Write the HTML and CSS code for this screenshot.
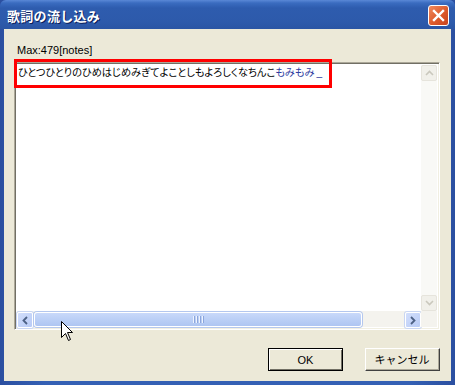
FILE: index.html
```html
<!DOCTYPE html>
<html lang="ja">
<head>
  <meta charset="UTF-8">
  <title>歌詞の流し込み</title>
  <link rel="stylesheet" href="styles.css">
</head>
<body>

  <div class="window">
    <div class="titlebar">
      <div class="title">歌詞の流し込み</div>
      <div class="close-btn">
        <svg width="13" height="13" viewBox="0 0 13 13">
          <path d="M2 2 L11 11 M11 2 L2 11" stroke="#fff" stroke-width="2.4" stroke-linecap="square"/>
        </svg>
      </div>
    </div>

    <div class="client">
      <div class="label">Max:479[notes]</div>

      <div class="editbox">
        <div class="edit-text">ひとつひとりのひめはじめみぎてよことしもよろしくなちんこ<span class="composing">もみもみ</span><span class="caret">_</span></div>

        <div class="vscroll">
          <div class="sb-btn sb-disabled">
            <svg width="9" height="6" viewBox="0 0 9 6"><path d="M1 5 L4.5 1.5 L8 5" fill="none" stroke="#cac8bd" stroke-width="1.6"/></svg>
          </div>
          <div class="sb-track"></div>
          <div class="sb-btn sb-disabled">
            <svg width="9" height="6" viewBox="0 0 9 6"><path d="M1 1 L4.5 4.5 L8 1" fill="none" stroke="#cac8bd" stroke-width="1.6"/></svg>
          </div>
        </div>

        <div class="hscroll">
          <div class="sb-btn sb-active">
            <svg width="6" height="9" viewBox="0 0 6 9"><path d="M5 1 L1.5 4.5 L5 8" fill="none" stroke="#4d6185" stroke-width="1.8"/></svg>
          </div>
          <div class="h-track">
            <div class="thumb">
              <div class="grip"><span></span><span></span><span></span><span></span></div>
            </div>
          </div>
          <div class="sb-btn sb-active">
            <svg width="6" height="9" viewBox="0 0 6 9"><path d="M1 1 L4.5 4.5 L1 8" fill="none" stroke="#4d6185" stroke-width="1.8"/></svg>
          </div>
        </div>

        <div class="corner"></div>
      </div>

      <div class="buttons">
        <div class="btn btn-default"><div class="btn-face">OK</div></div>
        <div class="btn"><div class="btn-face">キャンセル</div></div>
      </div>

      <div class="highlight"></div>

      <svg class="cursor" width="13" height="21" viewBox="0 0 13 21">
        <path d="M0.5 0.5 L0.5 16.5 L4.5 12.5 L7.5 19.5 L9.5 18.5 L6.5 11.5 L11.5 11.5 Z" fill="#fff" stroke="#000" stroke-width="1"/>
      </svg>
    </div>
  </div>

</body>
</html>
```

FILE: styles.css
```css
body {
  margin: 0;
  width: 455px;
  height: 385px;
  overflow: hidden;
  font-family: "Liberation Sans", "Noto Sans CJK JP", sans-serif;
}

.window {
  width: 455px;
  height: 385px;
  box-sizing: border-box;
  display: flex;
  flex-direction: column;
  background: linear-gradient(to right, #2b4fa0, #3460b4 10%, #3460b4 90%, #2b4fa0);
}

.titlebar {
  height: 29px;
  display: flex;
  align-items: center;
  justify-content: space-between;
  padding: 0 6px 0 7px;
  background: linear-gradient(#5a88d6 0px, #3a6cc0 3px, #2e5cae 8px, #2d5aab 22px, #2a55a4 29px);
  border-radius: 6px 6px 0 0;
}

.title {
  color: #fff;
  font-family: "Noto Sans CJK JP", sans-serif;
  font-weight: bold;
  font-size: 13px;
  letter-spacing: 0.3px;
  padding-top: 2px;
  text-shadow: 1px 1px 0 #0a1d5a;
}

.close-btn {
  width: 19px;
  height: 19px;
  border: 1px solid #fff;
  border-radius: 3px;
  background: linear-gradient(135deg, #f08a5e, #dc5a2c 55%, #c8431c);
  display: flex;
  align-items: center;
  justify-content: center;
  margin-top: 1px;
}

.client {
  position: relative;
  flex: 1;
  margin: 0 4px 4px 4px;
  background: #ece9d8;
  padding: 15px 11px 0 10px;
  display: flex;
  flex-direction: column;
}

.label {
  font-size: 11px;
  line-height: 13px;
  color: #000;
  padding-left: 3px;
  margin-bottom: 5px;
}

.editbox {
  height: 262px;
  border-top: 1px solid #aca899;
  border-left: 1px solid #aca899;
  border-right: 1px solid #fff;
  border-bottom: 1px solid #fff;
  box-shadow: inset 1px 1px 0 #716f64, inset -1px -1px 0 #f1efe2;
  padding: 2px;
  background: #fff;
  display: grid;
  grid-template-columns: 1fr 16px;
  grid-template-rows: 1fr 16px;
}

.edit-text {
  font-family: "Noto Sans CJK JP", sans-serif;
  font-size: 10.2px;
  font-feature-settings: "palt";
  line-height: 13px;
  color: #000;
  padding-left: 1px;
  white-space: nowrap;
  overflow: hidden;
}

.composing {
  color: #2c3aa0;
}

.caret {
  color: #2c3aa0;
  font-family: "Liberation Sans", sans-serif;
  margin-left: 2px;
}

.vscroll {
  display: flex;
  flex-direction: column;
  background: #f9f9f6;
}

.sb-btn {
  width: 16px;
  height: 16px;
  box-sizing: border-box;
  display: flex;
  align-items: center;
  justify-content: center;
  border-radius: 2px;
}

.sb-disabled {
  background: #f1f0ea;
  border: 1px solid #e6e4dc;
}

.sb-active {
  background: linear-gradient(135deg, #d2defb, #b8cbf6);
  border: 1px solid #fff;
  box-shadow: 0 0 0 1px #c9d6f3;
}

.sb-track {
  flex: 1;
}

.hscroll {
  display: flex;
  background: #f4f3ee;
  padding-top: 1px;
}

.h-track {
  flex: 1;
  padding: 0 1px;
  display: flex;
}

.thumb {
  width: 328px;
  box-sizing: border-box;
  border: 1px solid #fff;
  border-radius: 3px;
  box-shadow: 0 0 0 1px #b4c7ee;
  background: linear-gradient(#c9d9fa, #b8cdf5 60%, #aec5f2);
  display: flex;
  align-items: center;
  justify-content: center;
}

.grip {
  display: flex;
  gap: 1px;
}

.grip span {
  width: 1px;
  height: 7px;
  background: #eef3fe;
  border-right: 1px solid #8ca6dc;
}

.corner {
  background: #f4f3ee;
}

.buttons {
  display: flex;
  justify-content: flex-end;
  gap: 22px;
  margin-top: 18px;
}

.btn {
  width: 75px;
  height: 23px;
  box-sizing: border-box;
  border-top: 1px solid #fff;
  border-left: 1px solid #fff;
  border-right: 1px solid #404040;
  border-bottom: 1px solid #404040;
}

.btn-face {
  height: 100%;
  box-sizing: border-box;
  border-right: 1px solid #aca899;
  border-bottom: 1px solid #aca899;
  display: flex;
  align-items: center;
  justify-content: center;
  font-family: "Noto Sans CJK JP", sans-serif;
  font-size: 11px;
  color: #000;
}

.btn-default {
  border: 1px solid #000;
  box-shadow: inset 1px 1px 0 #fff, inset -1px -1px 0 #716f64;
}

.btn-default .btn-face {
  border: none;
  font-family: "Liberation Sans", sans-serif;
}

.highlight {
  position: absolute;
  left: 10px;
  top: 30px;
  width: 312px;
  height: 23px;
  border: 3px solid #ff0000;
}

.cursor {
  position: absolute;
  left: 57px;
  top: 292px;
}
```
